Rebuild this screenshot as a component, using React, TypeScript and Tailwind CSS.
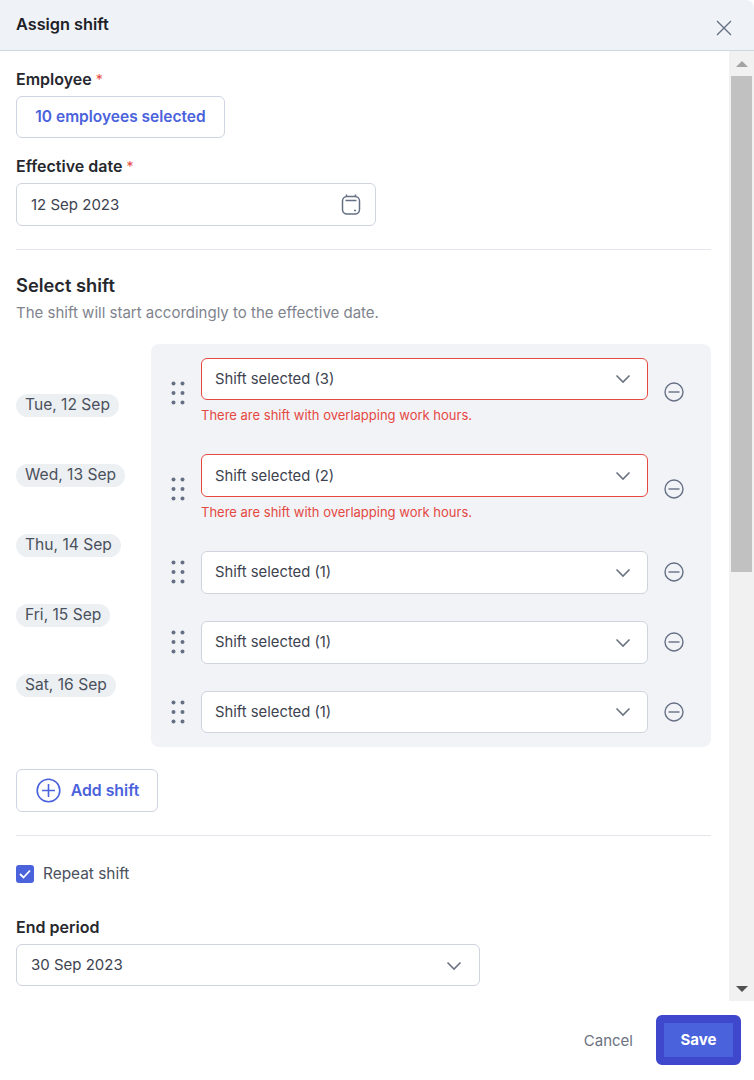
import React from "react";

function Chevron({ className = "" }: { className?: string }) {
  return (
    <svg width="16" height="16" viewBox="0 0 16 16" fill="none" stroke="#6b7280" strokeWidth="1.6" className={className}>
      <path d="M1.5 4.5 8 11l6.5-6.5" />
    </svg>
  );
}

function Grip() {
  const dots = [5.5, 14.5];
  const rows = [2.5, 12, 21.5];
  return (
    <svg width="20" height="24" viewBox="0 0 20 24" fill="#667085" className="shrink-0">
      {rows.map((y) => dots.map((x) => <circle key={`${x}-${y}`} cx={x} cy={y} r="2" />))}
    </svg>
  );
}

function Minus() {
  return (
    <svg width="20" height="20" viewBox="0 0 20 20" fill="none" stroke="#667085" strokeWidth="1.4" className="shrink-0">
      <circle cx="10" cy="10" r="9" />
      <path d="M4.5 10h11" />
    </svg>
  );
}

function ShiftRow({
  label,
  error,
  mb,
  h,
  minusPt,
}: {
  label: string;
  error?: boolean;
  mb: string;
  h: string;
  minusPt: string;
}) {
  return (
    <div className={`flex ${mb}`}>
      <div className={`flex w-[50px] justify-center ${error ? "pt-[23px]" : "pt-[9px]"} shrink-0`}>
        <div className="pl-[4px]"><Grip /></div>
      </div>
      <div className="w-[447px] shrink-0">
        <div
          className={`flex ${h} items-center justify-between rounded-md border bg-white pl-[13px] pr-[16px] text-[14.8px] text-[#3d4350] ${
            error ? "border-[#e5483f]" : "border-[#cfd4de]"
          }`}
        >
          <span className={h === "h-[43px]" && error ? "mt-[1px]" : ""}>{label}</span>
          <Chevron />
        </div>
        {error && <div className="mt-[6px] h-[18px] text-[13px] leading-[18px] text-[#e5483f]">There are shift with overlapping work hours.</div>}
      </div>
      <div className={`ml-[16px] ${minusPt}`}>
        <Minus />
      </div>
    </div>
  );
}

function DatePill({ text, mb }: { text: string; mb: string }) {
  return (
    <div className={`w-fit rounded-full bg-[#edf0f3] px-[9px] h-[23px] leading-[21px] text-[15.6px] text-[#4a505c] ${mb}`}>{text}</div>
  );
}

function Req() {
  return <span className="ml-[4px] text-[14px] text-[#e5483f] font-normal">*</span>;
}

export default function App() {
  return (
    <div className="h-[1080px] w-[754px] overflow-hidden bg-white font-['Inter',sans-serif] text-[14px]">
      <header className="flex h-[51px] items-center justify-between rounded-tr-lg border-b border-[#cdd7e2] bg-[#eff3f8] pl-[16px] pr-[22px]">
        <h1 className="mb-[2px] text-[16.3px] font-semibold text-[#1d2026]">Assign shift</h1>
        <svg width="16" height="16" viewBox="0 0 16 16" fill="none" stroke="#667085" strokeWidth="1.4" className="mt-[5px]">
          <path d="M1 1l14 14M15 1 1 15" />
        </svg>
      </header>

      <div className="flex h-[950px]">
        <main className="w-[729px] shrink-0 pl-[16px] pr-[18px]">
          <div className="mt-[19px] h-[18px] text-[16px] leading-[18px] font-semibold text-[#26282d]">
            Employee<Req />
          </div>
          <button className="mt-[8px] flex h-[42px] w-[209px] items-center justify-center rounded-md border border-[#cfd4e2] bg-white text-[15.5px] font-semibold text-[#4a62dc]">
            10 employees selected
          </button>
          <div className="mt-[19px] h-[18px] text-[16px] leading-[18px] font-semibold text-[#26282d]">
            Effective date<Req />
          </div>
          <div className="mt-[8px] flex h-[43px] w-[360px] items-center justify-between rounded-md border border-[#cfd4de] pl-[14px] pr-[14px] text-[15px] text-[#3d4350]">
            <span className="mt-[1px]">12 Sep 2023</span>
            <svg width="20" height="21" viewBox="0 0 20 21" fill="none" stroke="#667085" strokeWidth="1.5">
              <rect x="1.5" y="2.5" width="17" height="17.5" rx="4.5" />
              <path d="M5.5 .5v2M14.5 .5v2M4.5 6.5h11M13 16.5h2" />
            </svg>
          </div>

          <div className="mt-[23px] h-px bg-[#e4e6ec]" />

          <h2 className="mt-[25px] h-[20px] text-[18.3px] leading-[20px] font-semibold text-[#26282d]">Select shift</h2>
          <p className="mt-[7px] h-[20px] text-[15px] leading-[22px] text-[#80848d]">The shift will start accordingly to the effective date.</p>

          <div className="mt-[22px] flex">
            <div className="w-[135px] shrink-0 pt-[50px]">
              <DatePill text="Tue, 12 Sep" mb="mb-[47px]" />
              <DatePill text="Wed, 13 Sep" mb="mb-[47px]" />
              <DatePill text="Thu, 14 Sep" mb="mb-[47px]" />
              <DatePill text="Fri, 15 Sep" mb="mb-[47px]" />
              <DatePill text="Sat, 16 Sep" mb="" />
            </div>
            <div className="h-[403px] w-[560px] shrink-0 rounded-lg bg-[#f1f3f7] pt-[14px]">
              <ShiftRow label="Shift selected (3)" error mb="mb-[30px]" h="h-[42px]" minusPt="pt-[24px]" />
              <ShiftRow label="Shift selected (2)" error mb="mb-[30px]" h="h-[43px]" minusPt="pt-[25px]" />
              <ShiftRow label="Shift selected (1)" mb="mb-[27px]" h="h-[43px]" minusPt="pt-[11px]" />
              <ShiftRow label="Shift selected (1)" mb="mb-[27px]" h="h-[43px]" minusPt="pt-[11px]" />
              <ShiftRow label="Shift selected (1)" mb="" h="h-[42px]" minusPt="pt-[11px]" />
            </div>
          </div>

          <button className="mt-[22px] flex h-[43px] w-[142px] items-center justify-center gap-[10px] rounded-md border border-[#cfd4e2] bg-white pl-[1px] text-[15.8px] font-semibold text-[#4a62dc]">
            <svg width="25" height="25" viewBox="0 0 25 25" fill="none" stroke="#4a62dc" strokeWidth="1.6">
              <circle cx="12.5" cy="12.5" r="11.3" />
              <path d="M12.5 6v13M6 12.5h13" />
            </svg>
            <span>Add shift</span>
          </button>

          <div className="mt-[23px] h-px bg-[#e4e6ec]" />

          <label className="mt-[29px] flex h-[18px] items-center gap-[9px] text-[15.4px] text-[#4a505c]">
            <span className="flex size-[18px] items-center justify-center rounded-[3px] bg-[#4a62dc]">
              <svg width="12" height="10" viewBox="0 0 12 10" fill="none" stroke="#fff" strokeWidth="1.8">
                <path d="M1 5l3.5 3.5L11 1.5" />
              </svg>
            </span>
            <span className="mb-[1px]">Repeat shift</span>
          </label>

          <div className="mt-[35px] h-[18px] text-[16px] leading-[18px] font-semibold text-[#26282d]">End period</div>
          <div className="mt-[8px] flex h-[42px] w-[464px] items-center justify-between rounded-md border border-[#cfd4de] pl-[14px] pr-[17px] text-[15px] text-[#3d4350]">
            <span>30 Sep 2023</span>
            <Chevron className="mt-[1px]" />
          </div>
        </main>

        <div className="flex w-[25px] shrink-0 flex-col bg-[#f1f1f1]">
          <div className="flex h-[25px] items-center justify-center pt-[1px]">
            <div className="size-0 border-x-[6px] border-b-[6px] border-x-transparent border-b-[#a3a3a3]" />
          </div>
          <div className="mx-[2px] h-[496px] bg-[#c1c1c1]" />
          <div className="flex-1" />
          <div className="flex h-[25px] items-center justify-center">
            <div className="size-0 border-x-[6px] border-t-[6px] border-x-transparent border-t-[#505050]" />
          </div>
        </div>
      </div>

      <footer className="flex h-[79px] items-start justify-end pr-[13px] pt-[14px]">
        <button className="mr-[23px] mt-[1px] h-[50px] text-[15px] text-[#6b7280]">Cancel</button>
        <button className="flex h-[50px] w-[85px] items-center justify-center rounded-md border-[8px] border-[#3f47cc] bg-[#4a62dc] text-[15px] font-bold text-white">
          Save
        </button>
      </footer>
    </div>
  );
}
